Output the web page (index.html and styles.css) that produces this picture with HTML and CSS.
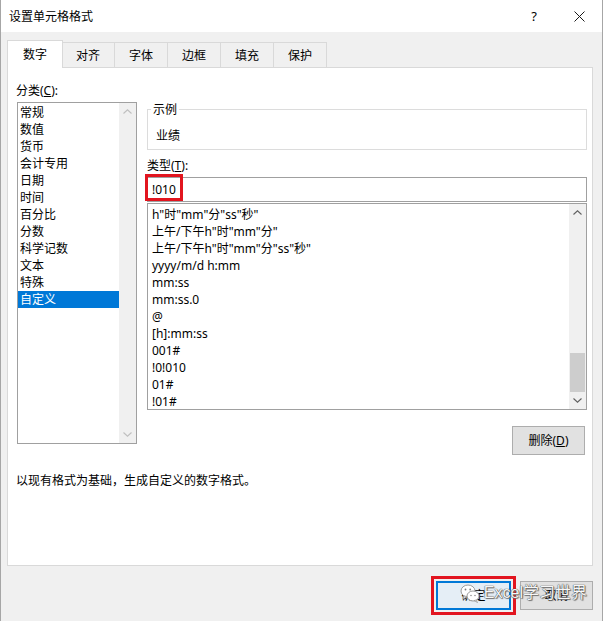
FILE: index.html
```html
<!DOCTYPE html>
<html lang="zh-CN">
<head>
<meta charset="utf-8">
<title>设置单元格格式</title>
<link rel="stylesheet" href="styles.css">
</head>
<body>
<div class="window">
  <div class="titlebar">
    <span class="title">设置单元格格式</span>
    <span class="help">?</span>
    <span class="close"><svg width="11" height="11" viewBox="0 0 11 11"><path d="M0.5 0.5 L10.5 10.5 M10.5 0.5 L0.5 10.5" stroke="#1a1a1a" stroke-width="1" fill="none"/></svg></span>
  </div>
  <div class="client">
    <div class="tabs">
      <div class="tab active">数字</div>
      <div class="tab">对齐</div>
      <div class="tab">字体</div>
      <div class="tab">边框</div>
      <div class="tab">填充</div>
      <div class="tab">保护</div>
    </div>
    <div class="panel">
      <div class="cols">
        <div class="left">
          <div class="label">分类(<u>C</u>):</div>
          <div class="listbox cat">
            <ul class="items">
              <li>常规</li>
              <li>数值</li>
              <li>货币</li>
              <li>会计专用</li>
              <li>日期</li>
              <li>时间</li>
              <li>百分比</li>
              <li>分数</li>
              <li>科学记数</li>
              <li>文本</li>
              <li>特殊</li>
              <li class="selected">自定义</li>
            </ul>
            <div class="vscroll disabled">
              <span class="arrow"><svg width="9" height="5" viewBox="0 0 9 5"><path d="M0.5 4.5 L4.5 0.8 L8.5 4.5" fill="none" stroke="currentColor" stroke-width="1.1"/></svg></span>
              <span class="track"></span>
              <span class="arrow"><svg width="9" height="5" viewBox="0 0 9 5"><path d="M0.5 0.5 L4.5 4.2 L8.5 0.5" fill="none" stroke="currentColor" stroke-width="1.1"/></svg></span>
            </div>
          </div>
        </div>
        <div class="right">
          <fieldset class="sample">
            <legend>示例</legend>
            <div class="sample-val">业绩</div>
          </fieldset>
          <div class="label type-label">类型(<u>T</u>):</div>
          <div class="input-wrap">
            <div class="input">!010</div>
            <span class="mark"></span>
          </div>
          <div class="listbox fmt">
            <ul class="items">
              <li>h"时"mm"分"ss"秒"</li>
              <li>上午/下午h"时"mm"分"</li>
              <li>上午/下午h"时"mm"分"ss"秒"</li>
              <li>yyyy/m/d h:mm</li>
              <li>mm:ss</li>
              <li>mm:ss.0</li>
              <li>@</li>
              <li>[h]:mm:ss</li>
              <li>001#</li>
              <li>!0!010</li>
              <li>01#</li>
              <li>!01#</li>
            </ul>
            <div class="vscroll">
              <span class="arrow"><svg width="9" height="5" viewBox="0 0 9 5"><path d="M0.5 4.5 L4.5 0.8 L8.5 4.5" fill="none" stroke="currentColor" stroke-width="1.1"/></svg></span>
              <span class="track"><span class="thumb"></span></span>
              <span class="arrow"><svg width="9" height="5" viewBox="0 0 9 5"><path d="M0.5 0.5 L4.5 4.2 L8.5 0.5" fill="none" stroke="currentColor" stroke-width="1.1"/></svg></span>
            </div>
          </div>
          <div class="btn-row">
            <button class="btn del">删除(<u>D</u>)</button>
          </div>
        </div>
      </div>
      <p class="desc">以现有格式为基础，生成自定义的数字格式。</p>
    </div>
    <div class="footer">
      <button class="btn ok">确定</button>
      <button class="btn cancel">取消</button>
      <div class="watermark">
        <svg class="wx" width="20" height="20" viewBox="0 0 20 20">
          <ellipse cx="8" cy="8" rx="7" ry="6" fill="#ffffff" stroke="#9a9a9a" stroke-width="1"/>
          <path d="M4 13 L3 16 L7 13.5 Z" fill="#ffffff" stroke="#9a9a9a" stroke-width="0.8"/>
          <ellipse cx="13" cy="13" rx="6" ry="5" fill="#ffffff" stroke="#9a9a9a" stroke-width="1"/>
          <path d="M16 17 L17.5 19.5 L14 17.6 Z" fill="#ffffff" stroke="#9a9a9a" stroke-width="0.8"/>
          <circle cx="5.5" cy="6.5" r="0.9" fill="#7a7a7a"/>
          <circle cx="10.2" cy="6.5" r="0.9" fill="#7a7a7a"/>
          <circle cx="11" cy="12.5" r="0.7" fill="#7a7a7a"/>
          <circle cx="15" cy="12.5" r="0.7" fill="#7a7a7a"/>
        </svg>
        <span class="wm-text">Excel学习世界</span>
      </div>
    </div>
  </div>
</div>
</body>
</html>
```

FILE: styles.css
```css
* { box-sizing: border-box; }

html, body {
  margin: 0;
  padding: 0;
  background: #f0f0f0;
}

body {
  font-family: "Noto Sans", "Noto Sans CJK SC", sans-serif;
  font-size: 12px;
  line-height: 17px;
  color: #000;
}

.window {
  width: 603px;
  height: 621px;
  background: #f0f0f0;
  border-left: 1px solid #a6a6a6;
  border-right: 1px solid #a6a6a6;
  overflow: hidden;
}

.titlebar {
  height: 32px;
  background: #fff;
  display: flex;
  align-items: center;
  padding-left: 8px;
}

.title {
  flex: 1;
  font-size: 12px;
}

.help {
  width: 12px;
  text-align: center;
  font-size: 13px;
  margin-right: 34px;
}

.close {
  display: flex;
  margin-right: 17px;
}

.client {
  padding: 8px 9px 0 6px;
}

.tabs {
  display: flex;
  align-items: flex-end;
  height: 27px;
  padding-left: 2px;
}

.tab {
  height: 25px;
  padding: 0 14px;
  border: 1px solid #d9d9d9;
  border-bottom: none;
  margin-right: -1px;
  background: #f0f0f0;
  display: flex;
  align-items: center;
  justify-content: center;
  padding-top: 1px;
}

.tab.active {
  height: 28px;
  margin-bottom: -1px;
  margin-left: -2px;
  margin-right: -2px;
  padding: 0 15px;
  padding-bottom: 1px;
  background: #fff;
  position: relative;
  z-index: 1;
}

.panel {
  height: 499px;
  width: 586px;
  background: #fff;
  border: 1px solid #d9d9d9;
  padding: 14px 5px 0 9px;
}

.cols {
  display: flex;
  gap: 10px;
}

.left {
  width: 120px;
  display: flex;
  flex-direction: column;
}

.label {
  margin-left: -1px;
  height: 17px;
}

u { text-decoration: underline; text-underline-offset: 1px; }

.listbox {
  border: 1px solid #a0a0a0;
  background: #fff;
  display: flex;
  overflow: hidden;
}

.listbox.cat {
  margin-top: 3px;
  height: 342px;
}

.items {
  list-style: none;
  margin: 0;
  padding: 1px 0 0 0;
  flex: 1;
  min-width: 0;
}

.items li {
  height: 17px;
  line-height: 17px;
  padding-left: 2px;
  white-space: nowrap;
}

.items li.selected {
  background: #0078d7;
  color: #fff;
}

.vscroll {
  width: 17px;
  background: #f0f0f0;
  display: flex;
  flex-direction: column;
  color: #606060;
}

.vscroll.disabled { color: #bfbfbf; }

.arrow {
  height: 17px;
  display: flex;
  align-items: center;
  justify-content: center;
}

.track {
  flex: 1;
  display: flex;
  flex-direction: column;
  justify-content: flex-end;
}

.thumb {
  height: 39px;
  margin: 0 1px;
  background: #cdcdcd;
}

.right {
  width: 440px;
  display: flex;
  flex-direction: column;
}

.sample {
  margin: 19px 0 0 0;
  border: 1px solid #dcdcdc;
  padding: 9px 8px 5px 8px;
  min-width: 0;
}

.sample legend {
  padding: 0 2px;
  margin-left: -5px;
  line-height: 17px;
  color: #000;
}

.sample-val { height: 17px; }

.type-label {
  margin-top: 7px;
  margin-left: 0;
}

.input-wrap {
  position: relative;
  margin-top: 3px;
}

.input {
  height: 25px;
  border: 1px solid #a0a0a0;
  padding: 3px 4px 0 4px;
  background: #fff;
}

.mark {
  position: absolute;
  left: -2px;
  top: -3px;
  width: 38px;
  height: 27px;
  border: 3px solid #e2151f;
}

.listbox.fmt {
  margin-top: 1px;
  height: 207px;
}

.fmt .items { padding-top: 2px; padding-left: 2px; }

.btn-row {
  display: flex;
  justify-content: flex-end;
  margin-top: 16px;
  padding-right: 2px;
}

.btn {
  font-family: inherit;
  font-size: 12px;
  line-height: 17px;
  color: #000;
  height: 29px;
  background: #e1e1e1;
  border: 1px solid #adadad;
  padding: 0;
}

.btn.del { width: 73px; }

.desc {
  margin: 17px 0 0 -1px;
}

.footer {
  position: relative;
  display: flex;
  justify-content: flex-end;
  gap: 9px;
  margin-top: 15px;
  padding-right: 0;
}

.btn.ok {
  width: 75px;
  border: 2px solid #0078d7;
  background: #e5eef6;
  outline: 3px solid #e2151f;
  outline-offset: 2px;
}

.btn.cancel { width: 73px; }

.watermark {
  position: absolute;
  right: 6px;
  top: 2px;
  display: flex;
  align-items: center;
  gap: 4px;
}

.wm-text {
  font-family: "Liberation Sans", "Noto Sans CJK SC", sans-serif;
  font-size: 16px;
  line-height: 20px;
  color: #f7f7f7;
  text-shadow: 0 0 1px #444, 0 0 1px #444, 1px 1px 1px #777;
}
```
